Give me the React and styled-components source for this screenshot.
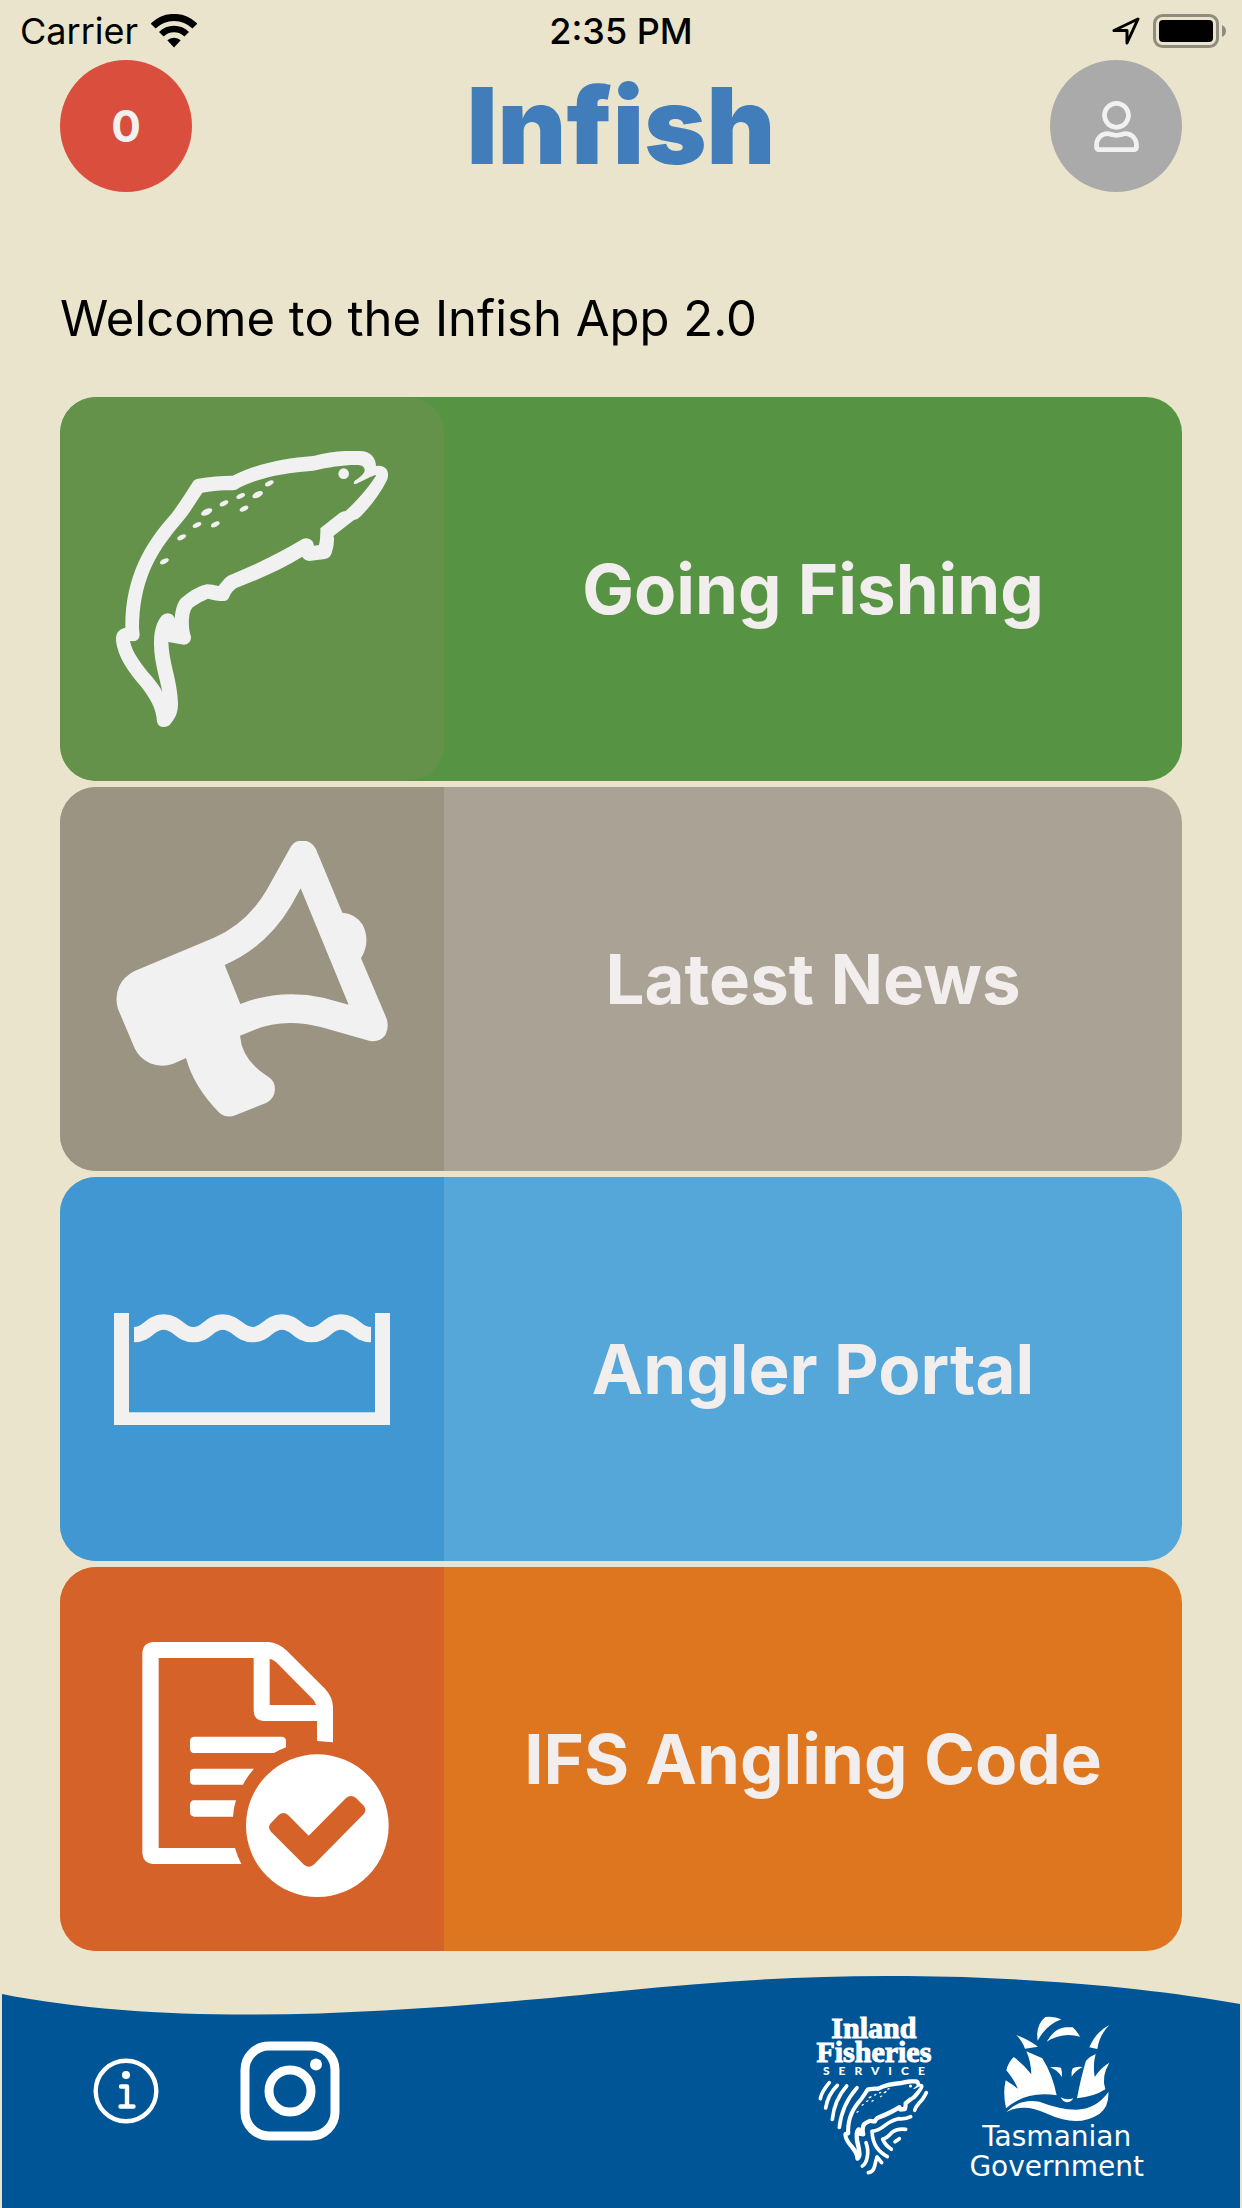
import React from 'react';
import styled, { createGlobalStyle } from 'styled-components';
import { FaRegUser } from 'react-icons/fa';

const GlobalStyle = createGlobalStyle`
  * {
    box-sizing: border-box;
  }
  body {
    margin: 0;
    background: #e9e4cb;
    font-family: Inter, "Liberation Sans", sans-serif;
  }
  button {
    font: inherit;
    border: 0;
    padding: 0;
    cursor: pointer;
  }
  svg {
    display: block;
    flex: none;
  }
`;

const Page = styled.div`
  min-height: 100vh;
  display: flex;
  flex-direction: column;
`;

const StatusBar = styled.div`
  height: 60px;
  padding: 2px 16px 0;
  display: grid;
  grid-template-columns: 1fr auto 1fr;
  align-items: center;
  font-size: 36px;
  line-height: 44px;
  color: #000;
`;

const StatusGroup = styled.div`
  display: flex;
  align-items: center;
  gap: 13px;
  padding-left: 4px;
  justify-content: ${(props) => (props.$end ? 'flex-end' : 'flex-start')};
`;

const Clock = styled.span`
  font-weight: 500;
`;

const Header = styled.header`
  display: flex;
  align-items: center;
  justify-content: space-between;
  height: 132px;
  padding: 0 60px;
`;

const RoundButton = styled.button`
  width: 132px;
  height: 132px;
  border-radius: 50%;
  display: flex;
  align-items: center;
  justify-content: center;
  background: ${(props) => props.$color};
  color: #f1f1f1;
  font-size: 44px;
  font-weight: 700;
`;

const Title = styled.h1`
  margin: 0;
  color: #417cbb;
  font-size: 106px;
  font-weight: 900;
  line-height: 132px;
`;

const Main = styled.main`
  padding: 97px 60px 0;
`;

const Welcome = styled.p`
  margin: 0 0 48px;
  font-size: 49px;
  line-height: 60px;
  color: #000;
`;

const Menu = styled.nav`
  display: flex;
  flex-direction: column;
  gap: 6px;
`;

const Card = styled.button`
  display: flex;
  align-items: stretch;
  width: 100%;
  height: 384px;
  border-radius: 36px;
  overflow: hidden;
  background: ${(props) => props.$color};
`;

const Tile = styled.span`
  flex: none;
  width: 384px;
  padding: 54px;
  background: ${(props) => props.$color};
  border-radius: ${(props) => (props.$rounded ? '36px' : '0')};
`;

const CardLabel = styled.span`
  flex: 1;
  align-self: center;
  color: #f2eeed;
  font-size: 69px;
  font-weight: 700;
  line-height: 84px;
  text-align: center;
`;

const Footer = styled.footer`
  margin: auto 2px 0;
`;

const Wave = styled.svg`
  width: 100%;
  height: 41px;
`;

const FooterBody = styled.div`
  display: flex;
  align-items: flex-start;
  justify-content: space-between;
  min-height: 192px;
  padding: 0 96px 26px 91px;
  background: #005596;
  color: #fff;
`;

const FooterActions = styled.div`
  display: flex;
  align-items: center;
  gap: 81px;
  padding-top: 25px;
`;

const InfoButton = styled.button`
  background: none;
  color: #fff;
`;

const SocialLink = styled.a`
  color: #fff;
`;

const Logos = styled.div`
  display: flex;
  gap: 38px;
`;

const Logo = styled.div`
  display: flex;
  flex-direction: column;
  align-items: center;
`;

const ServiceName = styled.span`
  font-family: "Liberation Serif", serif;
  font-size: 30px;
  font-weight: 700;
  line-height: 24px;
  -webkit-text-stroke: 1px #fff;
`;

const ServiceTag = styled.span`
  margin-right: -9px;
  font-family: Lato, sans-serif;
  font-size: 12px;
  font-weight: 900;
  line-height: 14px;
  letter-spacing: 9px;
`;

const GovName = styled.span`
  font-family: "DejaVu Sans", sans-serif;
  font-size: 28px;
  line-height: 30px;
`;

const FISH =
  'M978 228C978 205 962 183 930 183C885 181 840 185 790 198C700 204 620 222 548 257C515 257 480 260 440 267Q433 269 430 274C410 305 388 340 364 372C285 460 225 560 226 713C205 718 197 730 198 752C203 800 235 845 275 892C300 925 319 955 321 995Q325 1011 341 1011Q352 1011 358 1006C376 985 384 970 384 940C382 870 357 820 355 756L402 764Q424 762 423 740C416 720 416 700 417 685Q418 665 428 652Q450 635 474 626C490 631 505 633 522 633Q534 632 538 620Q545 603 559 594C630 567 700 535 757 500Q763 511 778 513L825 507Q840 505 845 490Q853 465 852 445Q852 440 850 438L912 390Q925 387 933 378C965 345 992 308 1010 272Q1018 255 1011 240Q1000 225 978 228Z' +
  'M911 280Q912 274 916 271C930 262 945 250 944 240Q943 227 925 225C880 224 840 231 790 242C700 248 620 264 558 299L548 301C515 299 490 302 457 308C437 338 417 372 394 398C310 495 268 580 267 715L269 735Q267 753 250 754L240 753C245 785 275 825 307 862C320 880 330 890 337 907C330 865 313 820 312 765C311 720 322 692 337 676Q352 664 367 674Q373 680 374 686C375 665 380 645 388 632Q392 624 400 620C425 600 450 587 470 583C482 583 495 586 506 588C515 577 522 566 535 557C615 525 690 488 758 447Q775 440 787 453Q791 460 792 467L807 465Q812 445 811 415L870 368Q880 364 887 363C918 335 950 300 975 262Q980 256 976 255C955 262 935 275 919 281Q912 284 911 280Z';

// x, y, half length
const SPOTS = [
  [658, 280, 14],
  [623, 314, 17],
  [572, 318, 14],
  [522, 340, 14],
  [582, 356, 14],
  [470, 366, 18],
  [441, 405, 14],
  [496, 403, 14],
  [395, 442, 14],
  [343, 514, 14],
];

const FishShape = () => (
  <g fill="currentColor">
    <path fillRule="evenodd" d={FISH} />
    <circle cx="881" cy="251" r="16" />
    {SPOTS.map(([x, y, r]) => (
      <ellipse key={`${x}-${y}`} cx={x} cy={y} rx={r} ry={r / 2} transform={`rotate(-26 ${x} ${y})`} />
    ))}
  </g>
);

const FishIcon = () => (
  <svg viewBox="192 183 828 828" width="276" height="276" color="#f1f1f1">
    <FishShape />
  </svg>
);

const MegaphoneIcon = () => (
  <svg viewBox="192 183 828 828" width="276" height="276" fill="#f1f1f1">
    <path
      fillRule="evenodd"
      d="M757 181Q785 182 798 208L877 398Q915 400 938 434Q963 485 933 535L1010 716Q1018 742 1006 765Q990 787 960 783L815 742Q700 712 607 752L570 767Q576 840 652 889Q675 902 675 928Q673 957 650 968L556 1006Q530 1016 508 998Q432 922 408 834L370 851Q335 864 300 850Q268 835 254 805L204 687Q193 650 208 618Q222 590 252 574L492 473Q590 432 650 330L719 206Q731 182 757 181ZM752 325L896 674L820 653Q690 625 571 672L524 555Q650 500 722 379Z"
    />
  </svg>
);

const PoolIcon = () => (
  <svg viewBox="192 -120 828 828" width="276" height="276">
    <path fill="#f1f1f1" d="M192 126h45v298h738v-298h45v336h-828z" />
    <path
      fill="none"
      stroke="#f1f1f1"
      strokeWidth="46"
      d="M252 191C296 191 297 153 341 153S387 191 430 191S475 153 518 153S565 191 608 191S652 153 696 153S741 191 785 191S829 153 873 153S919 191 963 191"
    />
  </svg>
);

const CodeIcon = () => (
  <svg viewBox="192 180 828 828" width="276" height="276" fill="#fff">
    <path
      fillRule="evenodd"
      d="M308 243H655Q685 245 709 268L825 383Q848 408 849 438V544L801 540V480H640Q612 478 611 449V291H326V861H555Q562 886 574 909H308Q279 906 277 877V274Q280 245 308 243ZM659 293V432H798Q796 423 790 416L678 303Q668 295 659 293Z"
    />
    <path d="M432 527H696Q708 528 708 540V559Q690 566 672 576H432Q420 575 420 563V540Q420 528 432 527Z" />
    <path d="M432 623H612Q592 645 579 671H432Q420 670 420 659V636Q420 624 432 623Z" />
    <path d="M432 718H558Q550 742 549 767H432Q420 765 420 754V730Q421 719 432 718Z" />
    <path
      fillRule="evenodd"
      d="M802 580A214 214 0 1 1 802 1008A214 214 0 1 1 802 580ZM776 824L715 763Q701 750 686 762L661 788Q652 800 663 812L762 911Q776 923 791 911L942 758Q950 747 942 735L918 711Q903 699 888 711Z"
    />
  </svg>
);

const WifiIcon = () => (
  <svg width="46" height="34" viewBox="0 0 46 34" fill="none" stroke="#000">
    <path strokeWidth="7" d="M2.1 12.1A29.5 29.5 0 0 1 43.9 12.1" />
    <path strokeWidth="6.5" d="M10.3 20.3A18 18 0 0 1 35.7 20.3" />
    <path fill="#000" stroke="none" d="M23 33.5L16.3 26.3A10 10 0 0 1 29.7 26.3Z" />
  </svg>
);

const LocationIcon = () => (
  <svg width="28" height="28" viewBox="0 0 28 28" fill="none" stroke="#000" strokeWidth="3" strokeLinejoin="round">
    <path d="M26 2L2 13.5H15V26Z" />
  </svg>
);

const BatteryIcon = () => (
  <svg width="73" height="34" viewBox="0 0 73 34">
    <rect x="1.5" y="1.5" width="63" height="31" rx="8" fill="none" stroke="#8f8c7d" strokeWidth="3" />
    <rect x="6" y="6" width="54" height="22" rx="4" />
    <path fill="#8f8c7d" d="M69 11Q73 13 73 17T69 23Z" />
  </svg>
);

const InfoIcon = () => (
  <svg width="66" height="66" viewBox="0 0 66 66" fill="none" stroke="currentColor">
    <circle cx="33" cy="33" r="30.3" strokeWidth="4.4" />
    <path strokeWidth="4.4" strokeLinecap="round" strokeLinejoin="round" d="M28 28.5H34V48M27.5 48.5H40.5" />
    <circle cx="33" cy="17" r="4" fill="currentColor" stroke="none" />
  </svg>
);

const InstagramIcon = () => (
  <svg width="100" height="100" viewBox="0 0 100 100" fill="none" stroke="currentColor" strokeWidth="9">
    <rect x="5" y="5" width="90" height="90" rx="24" />
    <circle cx="50" cy="50" r="21" />
    <circle cx="76" cy="23.500" r="6" fill="currentColor" stroke="none" />
  </svg>
);

const ServiceMark = () => (
  <svg width="115" height="97" viewBox="108 354 345 291" fill="none" stroke="#fff" strokeWidth="11" strokeLinecap="round" strokeLinejoin="round">
    <path d="M148 368Q125 395 121 416M172 376Q143 405 137 444M200 378Q163 420 157 478M231 383Q185 435 178 502" />
    <path d="M439 398Q428 420 418 428Q407 440 404 451" />
    <path d="M392 470Q378 478 355 476Q330 483 315 496Q295 512 276 514Q278 545 290 562Q300 578 322 590" />
    <path d="M377 508Q350 505 335 518Q320 535 308 537Q315 555 334 568" />
    <path d="M358 536L345 545" />
    <path d="M258 548Q266 570 262 590Q258 612 247 618" />
    <path d="M305 608L291 591Q288 600 284 618Q280 636 265 638" />
    <g transform="translate(131.600 304) scale(0.295)" stroke="none" color="#fff">
      <FishShape />
    </g>
  </svg>
);

const GovMark = () => (
  <svg width="106" height="106" viewBox="194 168 318 318" fill="#fff">
    <path d="M295 242Q288 195 318 171Q345 168 366 178Q320 195 295 242Z" />
    <path d="M322 245Q345 205 378 202L400 202Q412 212 422 230Q370 215 322 245Z" />
    <path d="M231 225Q270 240 296 260L257 266Q248 242 231 225Z" />
    <path d="M510 195Q470 215 450 262L474 267Q480 225 510 195Z" />
    <path d="M261 274L309 295Q340 345 352 406Q260 392 200 445Q190 400 199 361Q222 375 236 387Q225 360 201 331Q206 308 223 291Q250 310 276 343Q275 305 261 274Z" />
    <path d="M469 282Q450 290 440 302Q425 350 413 415Q465 410 498 388Q485 350 510 308Q485 322 466 351Q460 315 469 282Z" />
    <path d="M332 322Q350 319 365 323Q369 335 368 352Q355 330 332 322Z" />
    <path d="M430 321Q410 319 400 325Q395 335 397 350Q410 330 430 321Z" />
    <path d="M364 412Q383 422 402 415Q395 427 383 427Q370 425 364 412Z" />
    <path d="M201 456Q240 415 300 425Q360 448 410 449Q470 448 507 396Q510 440 480 462Q430 494 370 478Q345 472 320 460Q255 428 201 456Z" />
  </svg>
);

const menuItems = [
  { label: 'Going Fishing', color: '#569443', tile: '#64924b', rounded: true, Icon: FishIcon },
  { label: 'Latest News', color: '#aaa294', tile: '#9b9483', Icon: MegaphoneIcon },
  { label: 'Angler Portal', color: '#55a6d9', tile: '#4197d2', Icon: PoolIcon },
  { label: 'IFS Angling Code', color: '#dd761e', tile: '#d56229', Icon: CodeIcon },
];

const App = () => {
  return (
    <>
      <GlobalStyle />
      <Page>
        <StatusBar>
          <StatusGroup>
            <span>Carrier</span>
            <WifiIcon />
          </StatusGroup>
          <Clock>2:35 PM</Clock>
          <StatusGroup $end>
            <LocationIcon />
            <BatteryIcon />
          </StatusGroup>
        </StatusBar>

        <Header>
          <RoundButton $color="#d94e3d" aria-label="Notifications">0</RoundButton>
          <Title>Infish</Title>
          <RoundButton $color="#aaaaaa" aria-label="Profile">
            <FaRegUser size={51} />
          </RoundButton>
        </Header>

        <Main>
          <Welcome>Welcome to the Infish App 2.0</Welcome>
          <Menu>
            {menuItems.map(({ label, color, tile, rounded, Icon }) => (
              <Card key={label} $color={color}>
                <Tile $color={tile} $rounded={rounded}>
                  <Icon />
                </Tile>
                <CardLabel>{label}</CardLabel>
              </Card>
            ))}
          </Menu>
        </Main>

        <Footer>
          <Wave viewBox="0 0 1238 41" preserveAspectRatio="none">
            <path
              fill="#005596"
              d="M0 19C75 34 165 40 253 39.600C380 39 520 26 619 16C715 6 810 0 905 1C1030 2 1150 13 1238 29V41H0Z"
            />
          </Wave>
          <FooterBody>
            <FooterActions>
              <InfoButton aria-label="Information">
                <InfoIcon />
              </InfoButton>
              <SocialLink href="#instagram" aria-label="Instagram">
                <InstagramIcon />
              </SocialLink>
            </FooterActions>
            <Logos>
              <Logo>
                <ServiceName>Inland</ServiceName>
                <ServiceName>Fisheries</ServiceName>
                <ServiceTag>SERVICE</ServiceTag>
                <ServiceMark />
              </Logo>
              <Logo>
                <GovMark />
                <GovName>Tasmanian</GovName>
                <GovName>Government</GovName>
              </Logo>
            </Logos>
          </FooterBody>
        </Footer>
      </Page>
    </>
  );
};

export default App;
